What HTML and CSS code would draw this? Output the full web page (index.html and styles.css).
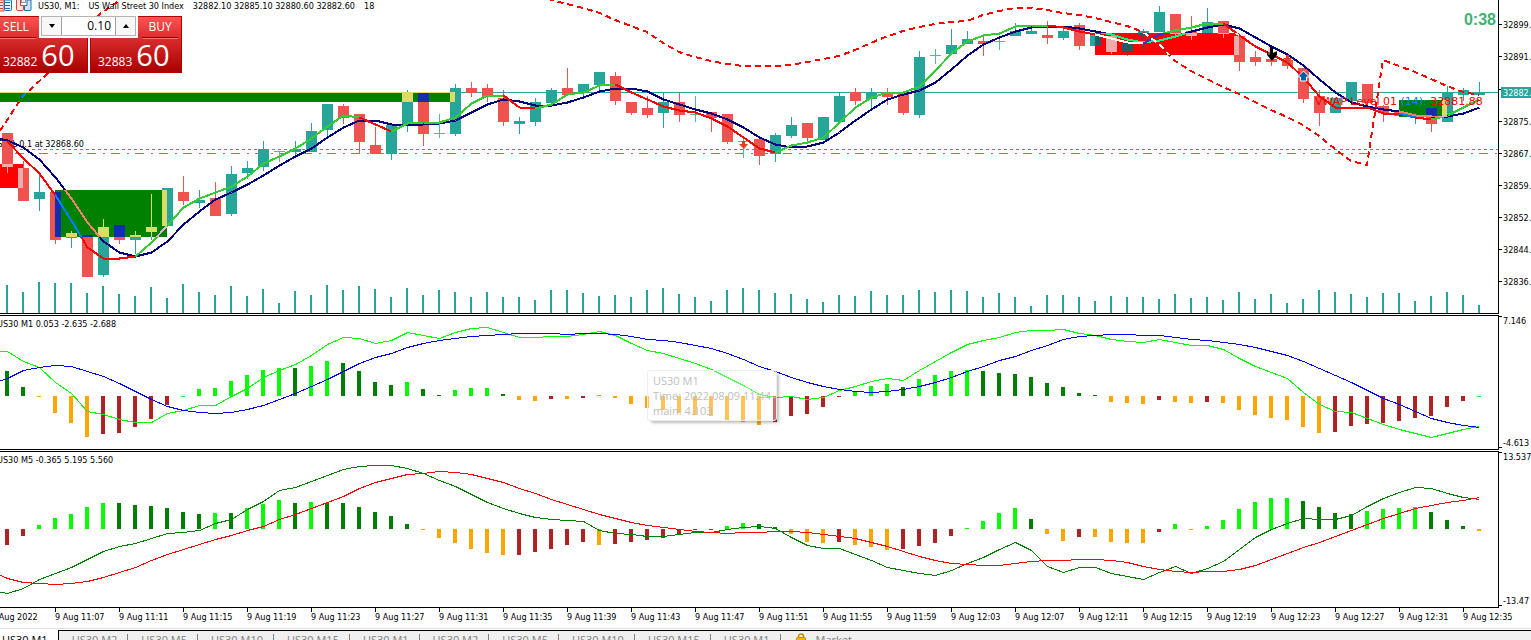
FILE: index.html
```html
<!DOCTYPE html>
<html lang="en">
<head>
<meta charset="utf-8">
<title>US30, M1</title>
<link rel="stylesheet" href="styles.css">
</head>
<body>
<main class="workspace">
  <section class="pane pane-price">
    <div class="plot">
      <svg class="canvas" id="price"></svg>
      <header class="chart-head">
        <span class="head-icons">
        <svg class="head-icon" width="12" height="12" viewBox="0 0 12 12">
          <rect x="-3" y="0" width="7" height="11" fill="#fbe3e0" stroke="#d9403a"/>
          <rect x="4.500" y="0" width="7" height="10.500" rx="1" fill="#e4f1fb" stroke="#1a6fb5"/>
          <path d="M0 2.500h3M0 5.500h3M0 8.500h3" stroke="#d9403a"/>
          <path d="M5 2.500h5M5 5.500h5M5 8.500h5" stroke="#1a6fb5"/>
        </svg>
        <svg class="head-icon" width="16" height="12" viewBox="0 0 16 12">
          <path d="M.5 0v9.500q0 1 1 1h5q1 0 1-1v-4H4.500v-6" fill="#fbe3e0" stroke="#d9403a"/>
          <path d="M8.500 10.500V5.500H11V0h4v9.500q0 1-1 1z" fill="#cfe6f8" stroke="#1a6fb5"/>
          <rect x="5.500" y="-1" width="4" height="3.500" fill="#eee" stroke="#999"/>
        </svg>
        </span>
        <span>US30, M1:</span>
        <span>US Wall Street 30 Index</span>
        <span>32882.10 32885.10 32880.60 32882.60</span>
        <span>18</span>
      </header>
      <form class="trade">
        <button type="button" class="deal sell"><span class="side">SELL</span><span class="quote"><small>32882</small><b>60</b></span></button>
        <div class="volume">
          <button type="button" class="step" aria-label="Decrease volume"><svg width="6" height="4"><path d="M0 0h6L3 4z"/></svg></button>
          <input type="text" class="lots" value="0.10" aria-label="Volume">
          <button type="button" class="step" aria-label="Increase volume"><svg width="6" height="4"><path d="M0 4h6L3 0z"/></svg></button>
        </div>
        <button type="button" class="deal buy"><span class="side">BUY</span><span class="quote"><small>32883</small><b>60</b></span></button>
      </form>
      <div class="countdown">0:38</div>
    </div>
    <svg class="scale" id="price-scale"></svg>
  </section>

  <section class="pane pane-fast">
    <div class="plot">
      <svg class="canvas" id="macd-m1"></svg>
      <h2 class="caption">US30 M1 0.053 -2.635 -2.688</h2>
      <div class="tip">US30 M1<br>Time: 2022.08.09 11:44<br>main: 4.103</div>
    </div>
    <svg class="scale" id="m1-scale"></svg>
  </section>

  <section class="pane pane-slow">
    <div class="plot">
      <svg class="canvas" id="macd-m5"></svg>
      <h2 class="caption">US30 M5 -0.365 5.195 5.560</h2>
    </div>
    <svg class="scale" id="m5-scale"></svg>
  </section>

  <ol class="timeline" id="timeline"></ol>
</main>

<nav class="tabs">
  <button class="tab active">US30,M1</button>
  <button class="tab">US30,M2</button>
  <button class="tab">US30,M5</button>
  <button class="tab">US30,M10</button>
  <button class="tab">US30,M15</button>
  <button class="tab">US30,M1</button>
  <button class="tab">US30,M2</button>
  <button class="tab">US30,M5</button>
  <button class="tab">US30,M10</button>
  <button class="tab">US30,M15</button>
  <button class="tab">US30,M1</button>
  <button class="tab market"><svg width="10" height="14" viewBox="0 0 10 14"><path d="M2.500 6V3.500a2.500 2.500 0 0 1 5 0V6" fill="none" stroke="#c58a00" stroke-width="1.500"/><rect x=".5" y="4.500" width="9" height="8" rx="1" fill="#f5b800" stroke="#c58a00"/><path d="M1 7.500h8" stroke="#c58a00"/></svg>Market</button>
</nav>
<script src="chart.js"></script>
</body>
</html>
```

FILE: styles.css
```css
* { box-sizing: border-box; }

body {
  margin: 0;
  height: 100vh;
  display: flex;
  flex-direction: column;
  overflow: hidden;
  background: #fff;
  color: #000;
  font: 9px/12px "DejaVu Sans Condensed", "DejaVu Sans", sans-serif;
}

button, input { font: inherit; color: inherit; margin: 0; padding: 0; border: 0; border-radius: 0; }

.workspace { flex: none; border-bottom: 1px solid #e0e0e0; }

.pane { display: flex; margin-bottom: 1px; }
.plot {
  position: relative;
  flex: 1;
  min-width: 0;
  overflow: hidden;
  border-right: 1px solid #000;
  border-bottom: 1px solid #000;
}
.pane-fast .plot, .pane-slow .plot { border-top: 1px solid #000; }
.pane-slow { margin-bottom: 0; }
.canvas { display: block; width: 100%; }
.pane-price .canvas, .pane-price .scale { height: 313px; }
.pane-fast .canvas { height: 133px; }
.pane-slow .canvas { height: 155px; }
.pane-fast .scale { height: 135px; }
.pane-slow .scale { height: 157px; }
.scale { flex: none; width: 32px; }
svg { overflow: hidden; }
svg text { font: 9px "DejaVu Sans Condensed", "DejaVu Sans", sans-serif; }
svg .vwap { font-family: "DejaVu Sans", sans-serif; font-size: 11px; }
.crisp { shape-rendering: crispEdges; }

.chart-head {
  position: absolute;
  top: 0;
  left: 0;
  display: flex;
  gap: 9px;
  white-space: nowrap;
}
.head-icons { display: flex; gap: 4px; margin-right: -3px; }
.head-icon { flex: none; }

.trade {
  position: absolute;
  top: 16px;
  left: 0;
  display: grid;
  grid-template-columns: 39px 49px 2px 48px 44px;
  grid-template-rows: 22px 35px;
  font: 12px/16px "Open Sans", "Noto Sans", sans-serif;
  background: #fff;
}
.deal {
  grid-row: 1 / 3;
  display: flex;
  flex-direction: column;
  color: #fff;
  border: 1px solid #b00000;
  background: linear-gradient(#ff5252, #d92b2b 22px, #aa0000);
}
.sell { grid-column: 1 / 3; border-left: 0; clip-path: polygon(0 0, 39px 0, 39px 22px, 100% 22px, 100% 100%, 0 100%); }
.buy { grid-column: 4 / 6; align-items: flex-end; clip-path: polygon(48px 0, 100% 0, 100% 100%, 0 100%, 0 22px, 48px 22px); }
.side { width: 36px; height: 21px; line-height: 20px; border-bottom: 1px solid #8e0000; text-align: center; box-shadow: 0 1px #ff7070; }
.sell .side { padding-right: 4px; }
.buy .side { margin-right: 3px; }
.quote { display: flex; align-items: baseline; gap: 4px; height: 34px; padding-left: 3px; }
.buy .quote { width: 100%; padding-left: 7px; }
.quote small { font-size: 12px; }
.quote b { font-size: 29px; line-height: 34px; font-weight: 400; }

.volume { grid-column: 2 / 5; grid-row: 1; display: flex; height: 20px; width: 95px; margin-left: 2px; border: 1px solid #b4b4b4; }
.step { width: 19px; display: grid; place-items: center; background: #f7f7f7; }
.lots { flex: 1; min-width: 0; padding-right: 4px; text-align: right; border: solid #a0a0a8; border-width: 0 1px; background: #fff; }

.countdown { position: absolute; top: 11px; right: 2px; font: bold 16px/18px "Liberation Sans", Arial, sans-serif; color: #3cb371; }

.caption { position: absolute; top: 2px; left: -3px; margin: 0; font: inherit; }
.tip {
  position: absolute;
  top: 54px;
  left: 647px;
  padding: 2px 5px;
  font: 11px/15px "Open Sans", "Noto Sans", sans-serif;
  color: #c0c0c0;
  background: rgba(252, 252, 252, .35);
  border: 1px solid #eee;
  border-radius: 3px;
  box-shadow: 3px 3px 3px -1px rgba(0, 0, 0, .25);
  white-space: nowrap;
}

.timeline {
  display: flex;
  margin: 0 0 0 -9px;
  padding: 0;
  height: 20px;
  list-style: none;
  overflow: hidden;
}
.timeline li { flex: none; width: 64px; line-height: 18px; white-space: nowrap; background: linear-gradient(#000, #000) 0 0 / 1px 4px no-repeat; }

.tabs {
  flex: 1;
  display: flex;
  min-height: 0;
  margin-top: 1px;
  overflow: hidden;
  background: #f0f0f0;
  font: 11px/16px "Open Sans", "Noto Sans", sans-serif;
  color: #808080;
  box-shadow: inset 0 1px #000;
}
.tab { flex: none; height: 20px; display: flex; align-items: center; gap: 10px; padding: 0 11px 0 13px; background: none; position: relative; }
.tab::after { content: ""; position: absolute; right: 0; top: 4px; bottom: 0; border-right: 1px solid #808080; }
.tab.active { padding: 0 10px 0 2px; background: #fff; color: #000; border-right: 1px solid #000; }
.tab.active::after, .market::after { display: none; }
.market { padding-left: 15px; }
```

FILE: chart.js
```js
const STEP = 16, FIRST = 7;
const xAt = i => FIRST + STEP * i;
const tag = (name, attrs, body = "") =>
  `<${name} ${Object.entries(attrs).map(([k, v]) => `${k}="${v}"`).join(" ")}>${body}</${name}>`;
const rect = (x, y, width, height, fill) => tag("rect", { x, y, width, height, fill });
const path = (points, stroke, width, dash) =>
  tag("polyline", { points: points.map(p => p.join()).join(" "), fill: "none", stroke, "stroke-width": width, ...(dash ? { "stroke-dasharray": dash } : {}) });
const series = ys => ys.map((y, i) => [xAt(i) + 0.5, y + 0.5]);
const label = (x, y, text, fill = "#000", extra = {}) => tag("text", { x, y, fill, ...extra }, text);

/* colour, high, body top, body bottom, low */
const candles = `r 133 133 167 173|r 161 168 201 201|g 175 192 199 211|r 192 192 240 244|g 231 233 238 248|r 235 235 277 277
g 219 227 275 277|r 225 225 240 244|g 231 235 240 254|g 194 227 232 240|g 188 188 226 226|r 176 192 201 205|g 190 200 203 208
r 182 198 216 216|g 166 174 214 216|g 161 168 173 179|g 141 149 167 171|d 151 151 152 162|g 141 149 152 155|g 123 131 152 152
g 104 104 130 136|r 104 106 118 124|r 114 114 142 153|r 127 145 154 154|g 125 125 154 160|g 90 92 125 132|r 92 92 134 146
d 114 133 134 138|g 84 88 134 136|r 82 88 93 97|r 84 88 97 102|r 90 98 122 126|g 117 121 124 134|g 98 102 122 126|g 88 90 103 103
r 68 88 95 95|g 84 84 92 96|g 72 72 85 90|r 72 76 101 105|r 102 102 113 115|r 96 108 115 118|g 92 102 113 128|r 92 102 115 122
d 96 114 115 122|r 112 112 118 132|r 114 114 142 144|d 138 141 142 158|r 138 139 156 165|g 133 135 154 162|g 117 125 136 138
r 123 123 138 141|g 117 117 140 140|g 92 96 122 122|r 88 92 101 105|g 88 92 99 109|r 88 92 97 105|r 94 94 113 115|g 51 57 115 118
d 49 55 56 64|g 29 45 54 54|g 31 39 44 44|r 36 41 44 56|d 37 41 42 50|g 23 31 36 36|g 29 31 34 34|r 21 35 38 44|g 27 31 38 40
r 23 25 46 50|g 34 34 46 46|r 36 36 52 54|g 43 43 52 56|g 29 31 36 50|g 6 12 32 32|r 14 14 34 38|r 16 31 36 40|g 8 22 34 34
r 21 21 34 38|r 36 36 62 71|r 51 57 62 66|r 47 59 62 66|r 60 60 66 69|r 68 68 99 103|r 90 96 113 126|g 98 98 113 113
g 82 82 101 105|r 84 84 103 107|r 105 106 113 122|r 111 111 116 116|g 115 115 118 124|r 108 108 124 132|g 86 92 122 122
g 88 90 95 101|g 82 92 95 95`.split(/[|\n]/).map(s => s.split(" ").map((v, k) => k ? +v : v));

const volumeTops = [285,292,282,283,283,293,286,294,296,287,298,284,292,295,286,296,289,303,291,295,285,290,286,289,297,288,295,290,292,297,292,297,297,300,290,290,293,296,295,297,290,288,294,297,301,290,288,290,293,294,299,302,295,296,291,295,295,290,292,290,291,297,293,297,306,295,295,297,301,296,297,297,299,294,298,297,300,292,299,294,303,299,290,292,294,297,293,293,301,296,292,295,305];

const fastMA = [141,158,173,195,220,247,258,258,256,242,225,207,198,192,186,176,163,156,148,138,126,115,117,124,131,123,122,122,117,103,95,95,107,108,104,94,92,85,84,92,99,106,110,112,118,126,137,148,152,145,142,137,122,107,97,92,92,86,70,53,41,35,33,26,25,25,27,31,34,38,42,43,34,30,27,23,23,35,46,54,62,77,96,107,107,107,113,113,117,119,115,107,99];
const slowMA = [140,147,159,177,198,222,241,252,256,252,241,224,211,199,192,184,175,165,156,148,137,127,120,120,124,125,124,123,120,112,104,99,101,105,105,102,97,91,88,88,91,99,104,109,113,119,127,137,144,147,146,142,132,120,109,99,94,90,82,69,55,44,37,31,27,26,26,28,31,34,39,42,40,36,31,27,24,28,37,46,54,65,79,92,102,106,109,111,115,116,116,113,107];
const fastRuns = [["down",0,8],["up",8,22],["down",22,24],["up",24,31],["down",31,33],["up",33,38],["down",38,48],["up",48,65],["down",65,71],["up",71,76],["down",76,89],["up",89,92]];

const bandLeft = [[0,131],[22,97],[45,76],[100,14],[120,0]];
const bandRight = [[548,-1],[567,4],[583,8],[600,13],[615,20],[647,32],[663,43],[679,52],[695,57],[711,61],[727,64],[743,66],[775,66],[791,65],[807,62],[823,59],[839,56],[855,50],[871,43],[880,39],[903,31],[919,27],[935,24],[951,22],[967,21],[983,15],[999,11],[1015,8],[1031,8],[1047,10],[1063,13],[1079,15],[1095,18],[1111,22],[1127,26],[1143,32],[1159,44],[1175,61],[1191,71],[1207,79],[1223,87],[1239,94],[1255,102],[1271,110],[1287,117],[1303,125],[1319,136],[1335,149],[1351,161],[1367,165],[1383,60],[1399,66],[1415,72],[1431,79],[1447,86],[1463,92],[1479,95]];

const base = { g: "#26a69a", r: "#ef5350", d: "#5fb88a", up: "#32cd32", down: "#ff0000", slow: "#000080", band: "#ff0000", price: "#26a69a" };
const onGreen = { g: "#dbdb66", r: "#102eb0", d: "#dbdb66", up: "#d8b4d8", down: "#0080ff", slow: "#ff8072", band: "#0080ff", price: "#dbdb66" };
const onRed = { g: "#265a66", r: "#f0acac", d: "#f0acac", up: "#3232cd", down: "#ffffff", slow: "#00ff80", band: "#ffffff", price: "#ffffff" };
const greenZones = [[0,92,455,10],[55,190,112,47],[1399,100,48,17]];
const redZones = [[0,164,23,24],[1095,33,144,22]];

function layer(c, overlay) {
  let out = overlay ? "" : rect(0, 92, 3000, 1, c.price);
  candles.forEach(([kind, high, top, bottom, low], i) => {
    out += rect(xAt(i), high, 1, Math.max(low - high, 1), c[kind]) + rect(xAt(i) - 5, top, 11, bottom - top, c[kind]);
  });
  if (overlay) out += rect(0, 92, 455, 1, c.price);
  out += path([[0, 139], ...series(slowMA)], c.slow, 2);
  for (const [dir, from, to] of fastRuns) out += path(series(fastMA).slice(from, to + 1), c[dir], 2);
  return out + path(bandLeft, c.band, 2, "6 4") + path(bandRight, c.band, 2, "6 4");
}

const zones = (list, fill) => list.map(z => rect(...z, fill)).join("");
const arrowDown = (x, y) => tag("path", { d: `M${x - 1} ${y - 4}h3v3h3l-4 5-5-5h3z`, fill: "#e04020" });

document.getElementById("price").innerHTML =
  `<defs><clipPath id="green">${zones(greenZones)}</clipPath><clipPath id="red">${zones(redZones)}</clipPath></defs>` +
  label(84, 147, "SELL 0.1 at 32868.60", "#000", { "text-anchor": "end" }) +
  `<g class="crisp">` +
  path([[20, 149.5], [3000, 149.5]], "#26a69a", 1, "3 3") +
  path([[15, 153.5], [3000, 153.5]], "#ef5350", 1, "9 7 2 6") +
  volumeTops.map((y, i) => rect(xAt(i) - 1, y, 2, 313 - y, "#26a69a")).join("") +
  layer(base) + zones(greenZones, "#008000") + zones(redZones, "#ff0000") +
  `<g clip-path="url(#green)">${layer(onGreen, true)}</g><g clip-path="url(#red)">${layer(onRed, true)}</g></g>` +
  arrowDown(743, 145) + arrowDown(1287, 59) +
  `<path d="M1303.500 71l6 6h-3v4h-6v-4h-3z" fill="#0060a8" stroke="#fff"/>` +
  `<path d="M1270 47h3v6l4-2v4l-5 6-5-6v-4l3 2z" fill="#000"/><path d="M1269 47v8" stroke="#f0a070"/>` +
  label(1315, 105, `VWAP Level 01 <tspan fill="#0080ff">(14): </tspan>32881.88`, "#ff0000", { class: "vwap" });

const tick = y => rect(0, y, 3, 1, "#000");
document.getElementById("price-scale").innerHTML =
  [[24,"32899."],[56,"32891."],[121,"32875."],[153,"32867."],[185,"32859."],[217,"32852."],[249,"32844."],[281,"32836."]]
    .map(([y, t]) => tick(y) + label(4, y + 4, t)).join("") +
  tick(89) + rect(2, 87, 30, 11, "#26a69a") + label(4, 96, "32882.", "#fff");

const tones = { L: "#00ff00", D: "#008000", O: "#ffa500", B: "#b22222" };
function oscillator(id, offset, zero, ends, codes, lines) {
  const bars = ends.map((y, i) => rect(xAt(i) - 2, Math.min(y, zero), 4, Math.max(Math.abs(y - zero), 1), tones[codes[i]])).join("");
  document.getElementById(id).innerHTML =
    `<g class="crisp" transform="translate(0 ${-offset})">${bars}${lines.map(([c, start, ys]) => path([[0, start], ...series(ys)], c, 1)).join("")}</g>`;
}

oscillator("macd-m1", 316, 396,
  [371,387,397,413,423,437,434,433,427,419,405,397,389,388,381,375,370,368,368,366,361,363,371,382,385,382,389,395,390,388,388,394,400,401,399,399,398,395,398,404,408,410,413,415,416,420,422,425,422,416,414,407,397,391,386,384,387,379,375,371,370,371,373,374,377,383,387,393,395,402,403,404,400,402,403,402,403,410,415,418,420,427,433,432,426,424,423,421,418,416,407,401,397],
  "DDOOOOBBBBBLLLLLLLDLLDDDDLDDLLLDOOBOBLOOOOOOOOOOBBBBBLLLDLLLLDDDDDDDDOOOBOOBOOOOOOOBBBBBBBBBL",
  [["#00ff00", 351, [351,361,367,382,393,411,414,419,422,422,413,410,405,405,396,388,377,370,364,355,344,337,338,343,340,332,335,338,332,328,327,332,337,337,336,336,334,331,335,343,350,353,358,363,369,377,385,394,397,396,399,397,390,386,381,378,380,370,361,352,344,340,337,332,330,330,329,333,335,339,341,342,339,342,345,345,349,358,366,372,378,392,404,411,412,418,424,429,433,437,433,429,426]],
   ["#0000ff", 381, [378,370,367,365,366,371,376,383,391,399,406,410,412,413,412,409,405,399,393,386,379,371,363,357,353,347,343,340,338,336,335,334,333,333,333,334,333,333,334,336,339,340,342,345,348,353,359,366,371,377,382,386,389,391,392,391,389,386,382,377,371,366,360,356,350,345,339,336,335,334,334,335,335,337,339,340,342,344,347,351,355,361,368,375,382,390,398,404,411,418,422,425,427]]]);

oscillator("macd-m5", 452, 529,
  [545,536,525,518,514,507,503,503,505,506,508,512,514,513,513,508,504,500,503,502,503,503,507,512,516,524,530,538,543,549,553,555,555,552,549,545,542,545,544,542,540,538,534,530,530,526,523,524,527,534,542,543,542,545,547,550,549,546,543,536,528,521,513,508,519,534,541,537,537,542,543,543,532,524,530,526,520,509,502,498,498,501,507,513,514,511,509,508,507,512,520,526,531],
  "BBLLLLLDDDDDDLDLLLDLDDDDDDOOOOOOBBBBBOBBBBBBBLLDDOOOBOOOBBBBLLLLDOOBOOOOBLOLLLLLLDDDDLLLLDDDO",
  [["#008000", 592, [593,588,579,573,567,559,551,546,543,538,533,532,530,523,519,509,501,490,487,481,475,469,466,465,465,468,473,480,486,494,502,508,513,517,519,520,521,530,533,534,536,536,534,532,532,529,527,526,528,537,545,548,548,554,560,567,570,573,575,570,563,557,549,542,550,566,572,567,567,573,576,579,572,566,573,568,561,549,537,529,523,518,519,519,515,506,498,492,487,488,493,497,499]],
   ["#ff0000", 575, [578,582,583,584,583,581,577,572,567,560,554,549,544,539,535,530,526,519,514,508,502,496,488,482,478,474,473,471,472,474,478,482,488,493,499,504,509,514,518,522,525,527,529,531,532,533,532,532,531,531,532,534,536,538,542,546,551,556,560,563,564,565,565,563,561,560,560,559,559,560,562,566,569,571,572,571,571,569,565,559,553,547,542,536,530,524,518,513,508,505,502,500,497]]]);

document.getElementById("m1-scale").innerHTML = tick(1) + label(4, 9, "7.146") + tick(132) + label(4, 131, "-4.613");
document.getElementById("m5-scale").innerHTML = tick(1) + label(4, 9, "13.537") + tick(154) + label(4, 153, "-13.47");

const stamps = ["9 Aug 2022"];
for (let m = 7; m <= 95; m += 4) stamps.push(`9 Aug ${11 + Math.floor(m / 60)}:${String(m % 60).padStart(2, "0")}`);
document.getElementById("timeline").innerHTML = stamps.map(s => `<li>${s}</li>`).join("");
```
